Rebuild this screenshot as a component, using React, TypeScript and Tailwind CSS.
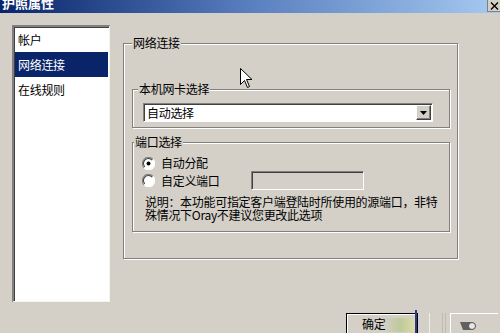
import React from "react";

const font = { fontFamily: '"Noto Sans CJK SC", "Liberation Sans", sans-serif' };

function Radio({ checked }: { checked?: boolean }) {
  return (
    <svg width="13" height="13" viewBox="0 0 12 12" className="shrink-0">
      <circle cx="6" cy="6" r="5.5" fill="#ffffff" />
      <path d="M10.2 2.1 A5.5 5.5 0 0 0 1.9 10" stroke="#808080" strokeWidth="1" fill="none" />
      <path d="M9.4 2.8 A4.5 4.5 0 0 0 2.6 9.2" stroke="#404040" strokeWidth="1" fill="none" />
      <path d="M10.2 2.1 A5.5 5.5 0 0 1 1.9 10" stroke="#ffffff" strokeWidth="1" fill="none" />
      {checked && <circle cx="6" cy="6" r="1.8" fill="#000" />}
    </svg>
  );
}

function GroupLegend({ children, left }: { children: React.ReactNode; left: string }) {
  return (
    <span
      className={`absolute -top-[8px] ${left} bg-[#d4d0c8] px-[1px] text-[12px] leading-[14px] tracking-[-0.3px] text-black`}
    >
      {children}
    </span>
  );
}

export default function App() {
  return (
    <div
      className="relative w-[500px] h-[333px] overflow-hidden bg-[#d4d0c8] text-black flex flex-col"
      style={font}
    >
      {/* Title bar */}
      <div className="h-[13px] shrink-0 flex items-start overflow-hidden bg-gradient-to-r from-[#0a246a] via-[#5a7fbf] to-[#a6caf0]">
        <span className="ml-[2px] -mt-[4px] text-[13px] font-bold leading-[14px] text-white tracking-[0px]">
          护照属性
        </span>
        <div className="ml-auto w-[13px] h-[12px] bg-[#d4d0c8] border-l border-b border-[#808080] flex items-center justify-center text-[12px] leading-none text-black">
          <svg width="9" height="8" viewBox="0 0 9 8">
            <path d="M1 0.5 L8 7.5 M8 0.5 L1 7.5" stroke="#000" strokeWidth="1.4" />
          </svg>
        </div>
      </div>

      {/* Body */}
      <div className="flex items-start shrink-0">
        {/* Left list */}
        <div className="ml-[12px] mt-[12px] w-[98px] h-[277px] bg-white border-t-2 border-l-2 border-t-[#808080] border-l-[#808080] border-r border-b border-r-[#f4f4f0] border-b-[#f4f4f0] shadow-[inset_1px_1px_0_#404040] pl-[1px] pr-[1px]">
          <div className="h-[25px] flex items-center pl-[3px] text-[12px] tracking-[-0.3px]">帐户</div>
          <div className="h-[25px] flex items-center pl-[3px] text-[12px] tracking-[-0.3px] bg-[#0a246a] text-white">
            网络连接
          </div>
          <div className="h-[26px] flex items-center pl-[3px] text-[12px] tracking-[-0.3px]">在线规则</div>
        </div>

        {/* Main group */}
        <div className="relative ml-[13px] mt-[30px] w-[335px] h-[216px] border border-[#808080] shadow-[inset_1px_1px_0_#ffffff,1px_1px_0_#ffffff] flex flex-col">
          <GroupLegend left="left-[8px]">网络连接</GroupLegend>

          {/* NIC group */}
          <div className="relative ml-[8px] mt-[45px] w-[318px] h-[39px] border border-[#808080] shadow-[inset_1px_1px_0_#ffffff,1px_1px_0_#ffffff]">
            <GroupLegend left="left-[5px]">本机网卡选择</GroupLegend>
            <div className="ml-[10px] mt-[13px] w-[290px] h-[19px] bg-white border-t border-l border-[#808080] border-r border-b border-r-[#ffffff] border-b-[#ffffff] shadow-[inset_1px_1px_0_#404040] flex items-center">
              <span className="ml-[3px] text-[12px] leading-none tracking-[-0.3px]">自动选择</span>
              <div className="ml-auto mr-[1px] w-[15px] h-[15px] bg-[#d4d0c8] border border-t-[#ffffff] border-l-[#ffffff] border-r-[#404040] border-b-[#404040] shadow-[inset_-1px_-1px_0_#808080] flex items-center justify-center">
                <svg width="7" height="4" viewBox="0 0 7 4">
                  <path d="M0 0 H7 L3.5 4 Z" fill="#000" />
                </svg>
              </div>
            </div>
          </div>

          {/* Port group */}
          <div className="relative ml-[8px] mt-[14px] w-[318px] h-[90px] border border-[#808080] shadow-[inset_1px_1px_0_#ffffff,1px_1px_0_#ffffff]">
            <GroupLegend left="left-[1px]">端口选择</GroupLegend>
            <div className="flex items-center ml-[9px] mt-[13px] h-[14px]">
              <Radio checked />
              <span className="ml-[6px] text-[12px] leading-none tracking-[-0.3px]">自动分配</span>
            </div>
            <div className="flex items-center ml-[9px] mt-[1px] h-[19px]">
              <Radio />
              <span className="ml-[6px] text-[12px] leading-none tracking-[-0.3px]">自定义端口</span>
              <div className="ml-[31px] w-[113px] h-[19px] border border-t-[#808080] border-l-[#808080] border-r-[#ffffff] border-b-[#ffffff] shadow-[inset_1px_1px_0_#404040] bg-[#d4d0c8]" />
            </div>
            <p className="ml-[12px] mt-[5px] w-[300px] text-[12px] leading-[13px] tracking-[-0.3px]">
              说明：本功能可指定客户端登陆时所使用的源端口，非特
              <br />
              殊情况下Oray不建议您更改此选项
            </p>
          </div>
        </div>
      </div>

      {/* Bottom buttons */}
      <div className="flex items-start mt-[11px] shrink-0">
        <div className="relative ml-[346px] w-[72px] h-[22px] border border-black bg-[#d4d0c8] shadow-[inset_1px_1px_0_#ffffff,inset_-1px_-1px_0_#404040] flex items-start">
          <span className="ml-[15px] mt-[4px] text-[12px] leading-none tracking-[-0.3px]">确定</span>
          <div className="absolute left-[36px] top-[4px] w-[34px] h-[14px] bg-gradient-to-r from-transparent via-[#b8c890] to-[#e8e0a0] opacity-80" />
          <div className="absolute right-[0px] -top-[4px] w-[2px] h-[26px] bg-[#2a3a8a]" />
        </div>
        <div className="ml-[11px] w-[1px] h-[22px] bg-[#f0eee8]" />
        <div className="ml-[12px] w-[1px] h-[22px] bg-[#c0bcb4]" />
        <div className="ml-[2px] w-[1px] h-[22px] bg-[#c0bcb4]" />
        <div className="ml-[4px] w-[48px] h-[22px] border-t border-l border-[#ffffff] bg-[#d4d0c8] flex items-start">
          <svg width="18" height="12" viewBox="0 0 18 12" className="ml-[8px] mt-[6px]">
            <path d="M1 2 H12 L14 5 V10 H4 Z" fill="#606060" />
            <circle cx="13" cy="6" r="3.5" fill="#e8e8e8" stroke="#505050" />
          </svg>
        </div>
      </div>

      {/* Mouse cursor */}
      <svg
        className="absolute left-[240px] top-[68px]"
        width="13"
        height="21"
        viewBox="0 0 13 21"
      >
        <path
          d="M0.5 0.5 V16.5 L4.5 12.5 L7.5 19.5 L9.5 18.5 L6.5 11.5 H12 Z"
          fill="#ffffff"
          stroke="#000000"
          strokeWidth="1"
          strokeLinejoin="round"
        />
      </svg>
    </div>
  );
}
